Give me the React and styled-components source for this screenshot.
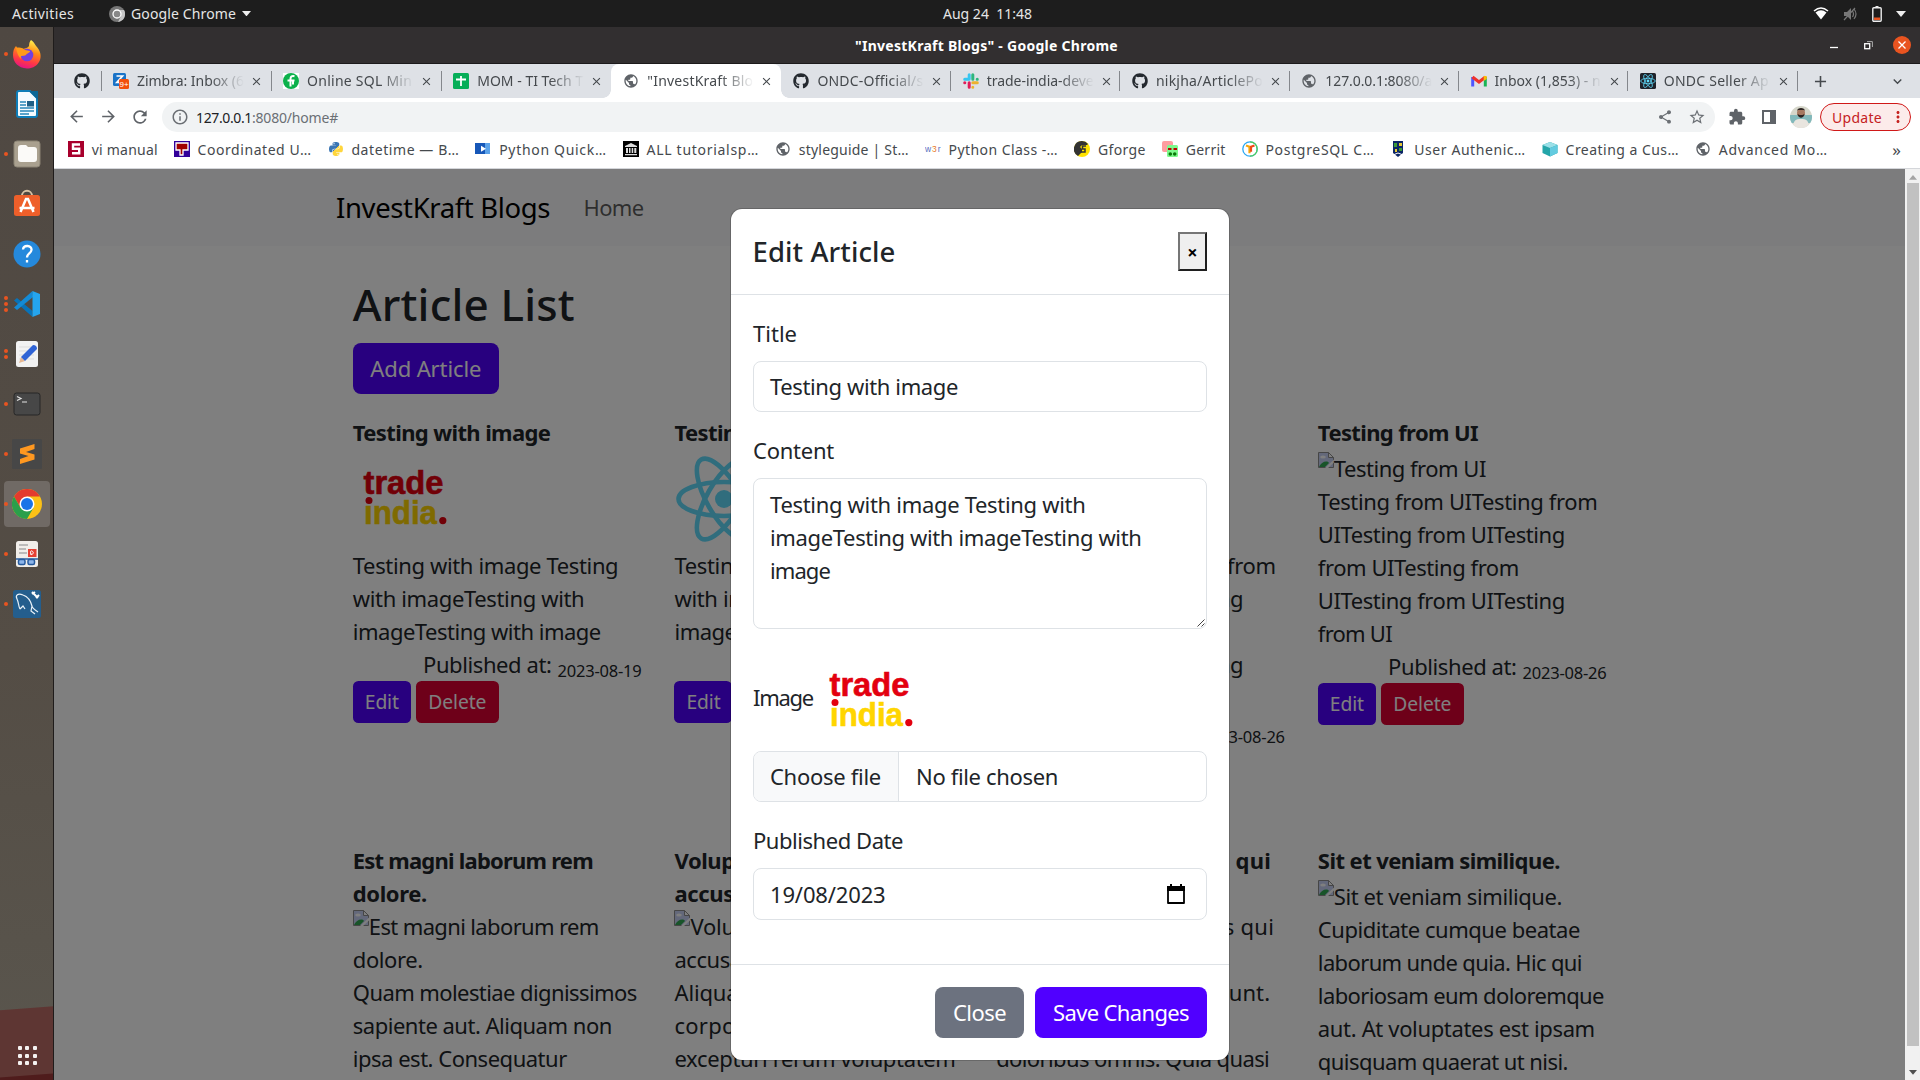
import React, { useLayoutEffect, useRef, useState } from "react";
import styled, { createGlobalStyle, css } from "styled-components";
import { FaGithub, FaPython } from "react-icons/fa";
import {
  MdArrowBack, MdArrowForward, MdRefresh, MdInfoOutline, MdShare, MdStarBorder,
  MdExtension, MdPublic, MdClose, MdAdd, MdExpandMore, MdMoreVert,
} from "react-icons/md";

const Global = createGlobalStyle`
  *, *::before, *::after { box-sizing: border-box; }
  body { margin: 0; overflow: hidden; font-family: "Noto Sans", "Open Sans", sans-serif; }
  button { font-family: inherit; }
  svg { display: block; flex: none; }
`;

/* Text tracked so that its run takes exactly w pixels. */
const Run = styled.span`
  display: inline-block;
  white-space: pre;
`;
function Fit({ w, children }) {
  const ref = useRef(null);
  const [spacing, setSpacing] = useState(0);
  useLayoutEffect(() => {
    ref.current.style.letterSpacing = "0px";
    const natural = ref.current.getBoundingClientRect().width;
    const value = (w - natural) / children.length;
    ref.current.style.letterSpacing = `${value}px`;
    setSpacing(value);
  }, [w, children]);
  return <Run ref={ref} style={{ letterSpacing: `${spacing}px` }}>{children}</Run>;
}

const Desktop = styled.div`
  width: 1920px;
  height: 1080px;
  display: flex;
  flex-direction: column;
  overflow: hidden;
`;

/* ---------- top panel ---------- */
const Panel = styled.header`
  height: 27px;
  flex: none;
  display: grid;
  grid-template-columns: 1fr auto 1fr;
  align-items: center;
  padding: 0 14px 0 12px;
  background: #1d1d1d;
  color: #e6e6e6;
  font-size: 14px;
  line-height: 26px;
`;
const PanelGroup = styled.div`
  display: flex;
  align-items: center;
  justify-content: ${(p) => (p.$end ? "flex-end" : "flex-start")};
  gap: ${(p) => p.$gap}px;
`;
const Clock = styled.div`
  padding-left: 57px;
`;
const AppMenu = styled.div`
  display: flex;
  align-items: center;
  gap: 6px;
  margin-left: 26px;
`;

/* ---------- dock ---------- */
const Body = styled.div`
  flex: 1;
  display: flex;
  min-height: 0;
`;
const Dock = styled.nav`
  width: 54px;
  flex: none;
  display: flex;
  flex-direction: column;
  padding: 2px 0 0;
  border-right: 1px solid #1f1c1b;
  background:
    linear-gradient(175.7deg, transparent 980px, #5e3633 981px, #5e3633 1047px, #4f1c1c 1048px),
    linear-gradient(#4f4842, #544d45 60%, #5a564e);
`;
const DockItem = styled.div`
  height: 50px;
  display: flex;
  align-items: center;
`;
const DockTile = styled.div`
  width: 46px;
  height: 46px;
  margin-left: 4px;
  border-radius: 4px;
  display: flex;
  align-items: center;
  background: ${(p) => (p.$active ? "#706a65" : "transparent")};
`;
const Dots = styled.div`
  width: 4px;
  display: flex;
  flex-direction: column;
  gap: 2px;
  margin-right: 4px;
`;
const Dot = styled.i`
  height: 4px;
  border-radius: 2px;
  background: #e95420;
`;
const AppsButton = styled.div`
  margin: auto 0 15px 17.5px;
  display: grid;
  grid-template-columns: repeat(3, 4px);
  gap: 3.5px;
`;
const AppsDot = styled.i`
  height: 4px;
  border-radius: 1px;
  background: #f4f2f1;
`;

/* ---------- browser window ---------- */
const Window = styled.main`
  flex: 1;
  min-width: 0;
  display: flex;
  flex-direction: column;
`;
const TitleBar = styled.div`
  height: 37px;
  flex: none;
  display: grid;
  grid-template-columns: 1fr auto 1fr;
  align-items: center;
  padding: 0 9px 0;
  background: #322f30;
  border-bottom: 1px solid #1c1a1b;
  color: #fff;
  font-size: 14px;
  font-weight: 700;
  line-height: 36px;
`;
const WindowTitle = styled.div`
  grid-column: 2;
  padding: 1px 1px 0 0;
  height: 36px;
`;
const WindowButtons = styled.div`
  display: flex;
  justify-content: flex-end;
  align-items: center;
  gap: 20.5px;
`;
const Minimise = styled.svg`
  margin-right: 5px;
`;
const Tabs = styled.div`
  height: 34px;
  flex: none;
  display: flex;
  align-items: center;
  background: #dee1e6;
  color: #45494d;
  font-size: 14px;
`;
const Pinned = styled.div`
  width: 47px;
  display: flex;
  padding-left: 20px;
`;
const NewTab = styled.div`
  padding-left: 13.5px;
`;
const TabSearch = styled.div`
  margin: 0 14px 0 auto;
`;
const Tab = styled.div`
  width: ${(p) => p.$w}px;
  height: 34px;
  flex: none;
  display: flex;
  align-items: center;
  position: relative;
  padding-left: 12px;
  ${(p) => p.$active && css`
    background: #fff;
    border-radius: 8px 8px 0 0;
    &::before, &::after {
      content: "";
      position: absolute;
      bottom: 0;
      width: 8px;
      height: 8px;
    }
    &::before { left: -8px; background: radial-gradient(circle at 0 0, transparent 7.5px, #fff 8px); }
    &::after { right: -8px; background: radial-gradient(circle at 100% 0, transparent 7.5px, #fff 8px); }
  `}
`;
const TabRule = styled.i`
  width: 1px;
  height: 20px;
  margin: 0 -0.5px;
  flex: none;
  background: ${(p) => (p.$hidden ? "transparent" : "#84878c")};
`;
const TabLabel = styled.div`
  width: 107px;
  margin: 0 6px 1px 8px;
  overflow: hidden;
  white-space: nowrap;
  mask-image: linear-gradient(90deg, #000 68%, transparent);
`;
const Spacer = styled.div`
  flex: 1;
`;
const Toolbar = styled.div`
  height: 38px;
  flex: none;
  display: flex;
  align-items: center;
  padding: 0 9px 0 13px;
  background: #fff;
  color: #5f6368;
`;
const NavIcons = styled.div`
  display: flex;
  gap: 12.5px;
  width: 95px;
  flex: none;
`;
const Address = styled.div`
  width: 1553px;
  flex: none;
  height: 30px;
  border-radius: 15px;
  display: flex;
  align-items: center;
  gap: 7px;
  padding: 0 9px;
  background: #f1f3f4;
  font-size: 14px;
  color: #6b6f74;
`;
const Url = styled.span`
  flex: 1;
  b { font-weight: 400; color: #202124; }
`;
const AddressIcons = styled.div`
  display: flex;
  align-items: center;
  gap: 15px;
`;
const Actions = styled.div`
  flex: 1;
  display: flex;
  align-items: center;
  padding-left: 13px;
`;
const SideIcon = styled.div`
  width: 14px;
  height: 14px;
  border: 2px solid #5f6368;
  border-right-width: 6px;
  margin: 0 14px 0 16px;
`;
const Update = styled.div`
  width: 91px;
  height: 28px;
  margin-left: 8px;
  padding: 0 3px 0 11px;
  border: 1px solid #d01818;
  border-radius: 14px;
  display: flex;
  align-items: center;
  justify-content: space-between;
  background: #fcebea;
  color: #c5221f;
  font-size: 14px;
`;
const Bookmarks = styled.div`
  height: 33px;
  flex: none;
  display: flex;
  align-items: center;
  padding: 0 19px 6px 14px;
  gap: 16px;
  background: #fff;
  border-bottom: 1px solid #d4d6da;
  color: #45494d;
  font-size: 14px;
`;
const Bookmark = styled.div`
  display: flex;
  align-items: center;
  gap: 7.8px;
  flex: none;
`;
const More = styled.div`
  margin-left: auto;
  font-size: 17px;
`;

/* ---------- page ---------- */
const Viewport = styled.div`
  flex: 1;
  min-height: 0;
  display: flex;
  overflow: hidden;
`;
const Page = styled.div`
  width: 1851px;
  position: relative;
  overflow: hidden;
  background: #fff;
  color: #212529;
  font-size: 22px;
  line-height: 33px;
`;
const Navbar = styled.div`
  height: 77px;
  display: flex;
  align-items: center;
  gap: 33.5px;
  padding-left: 282px;
  background: #f8f9fa;
  color: rgba(0, 0, 0, 0.65);
`;
const Brand = styled.span`
  font-size: 27.5px;
  color: #000;
`;
const Container = styled.div`
  padding: 31px 0 0 298.8px;
`;
const Heading = styled.h1`
  margin: 0 0 11px;
  height: 55px;
  font-size: 44px;
  font-weight: 540;
  line-height: 55px;
`;
const tones = { primary: "#5000ff", danger: "#dc0032", secondary: "#6c727f" };
const Button = styled.button`
  display: inline-flex;
  align-items: center;
  justify-content: center;
  width: ${(p) => p.$w}px;
  height: ${(p) => (p.$small ? 42 : 51)}px;
  padding: 0;
  border: 0;
  border-radius: ${(p) => (p.$small ? 5.5 : 8)}px;
  background: ${(p) => tones[p.$tone]};
  color: #fff;
  font-size: ${(p) => (p.$small ? 19.25 : 22)}px;
  line-height: 1.5;
`;
const Row = styled.div`
  display: flex;
  gap: 33px;
  height: 428px;
  margin-top: ${(p) => (p.$first ? 22 : 0)}px;
`;
const Card = styled.article`
  width: 288.7px;
  flex: none;
`;
const Line = styled.div`
  height: 33px;
  display: flex;
  font-weight: ${(p) => (p.$bold ? 700 : 400)};
  margin-top: ${(p) => p.$drop || 0}px;
`;
const Picture = styled.div`
  width: 100px;
  height: 100px;
`;
const Published = styled.div`
  height: 33px;
  display: flex;
  justify-content: flex-end;
  gap: 6px;
`;
const DateText = styled.span`
  font-size: 16.5px;
  line-height: 45px;
`;
const CardButtons = styled.div`
  display: flex;
  gap: 5px;
`;
const Backdrop = styled.div`
  position: absolute;
  inset: 0;
  background: rgba(0, 0, 0, 0.5);
  display: flex;
  justify-content: center;
  align-items: flex-start;
  padding-top: 40px;
`;
const Modal = styled.section`
  width: 498px;
  height: 851px;
  margin-left: 1px;
  border-radius: 11px;
  background: #fff;
  box-shadow: 0 0 0 1px rgba(0, 0, 0, 0.175);
`;
const ModalHeader = styled.div`
  height: 86px;
  display: flex;
  align-items: center;
  justify-content: space-between;
  padding: 0 22px 0 21.5px;
  border-bottom: 1px solid #dee2e6;
  font-size: 27.5px;
  font-weight: 540;
`;
const CloseBox = styled.button`
  width: 29px;
  height: 39px;
  padding: 1px 0 0;
  border: 2px solid;
  border-color: #767676 #1f1f1f #1f1f1f #767676;
  background: #efefef;
  color: #000;
  font-size: 18px;
  font-weight: 700;
`;
const Form = styled.div`
  height: 669px;
  padding: 22px;
`;
const Label = styled.div`
  height: 33px;
  margin-bottom: 11px;
`;
const Field = styled.div`
  height: ${(p) => p.$h || 51}px;
  margin-bottom: 22px;
  border: 1px solid #dee2e6;
  border-radius: 8px;
  padding: ${(p) => (p.$h > 100 ? "9px 0 0 16px" : "0 20px 0 16px")};
  display: flex;
  align-items: ${(p) => (p.$h > 100 ? "stretch" : "center")};
`;
const Lines = styled.div`
  display: flex;
  flex-direction: column;
  align-items: flex-start;
  flex: 1;
`;
const Grip = styled.svg`
  align-self: flex-end;
  margin: 0 1px 1px 0;
`;
const ImageRow = styled.div`
  height: 100px;
  display: flex;
  align-items: center;
  gap: 6px;
`;
const ImageLabel = styled.span`
  margin-top: -8px;
`;
const FileButton = styled.div`
  height: 49px;
  width: 144.5px;
  margin: 0 17.5px 0 -16px;
  padding: 8px 0 0 16px;
  border-right: 1px solid #dee2e6;
  border-radius: 7px 0 0 7px;
  background: #f8f9fa;
`;
const ModalFooter = styled.div`
  height: 96px;
  display: flex;
  justify-content: flex-end;
  gap: 11px;
  padding: 22px;
  border-top: 1px solid #dee2e6;
`;
const Scrollbar = styled.div`
  width: 15px;
  display: flex;
  flex-direction: column;
  align-items: center;
  justify-content: space-between;
  padding: 6px 0 5px;
  background: #f1f1f1;
`;
const Thumb = styled.div`
  width: 12px;
  height: 863px;
  margin: 3px 0 auto 1px;
  background: #c1c1c1;
`;

/* ---------- drawings ---------- */
const Svg = ({ s = 16, vb = 16, children }) => (
  <svg width={s} height={s} viewBox={`0 0 ${vb} ${vb}`}>{children}</svg>
);
const Caret = ({ c = "#eee", up, w = 10 }) => (
  <svg width={w} height={w * 0.6} viewBox="0 0 10 6"><path d={up ? "M0 6h10L5 0z" : "M0 0h10L5 6z"} fill={c} /></svg>
);
const SlackMark = () => (
  <Svg>
    <g strokeWidth="3" strokeLinecap="round">
      <path d="M6.2 1.7v4.4M1.7 6.2h.2M1.8 6.2h4.2" stroke="#36c5f0" />
      <path d="M9.8 1.7v4.5M14.2 6.2h.1" stroke="#2eb67d" />
      <path d="M9.8 9.8h4.5M9.8 14.2v.1" stroke="#ecb22e" />
      <path d="M6.2 9.8v4.5M1.7 9.8h.1" stroke="#e01e5a" />
    </g>
  </Svg>
);
const ReactRings = ({ w }) => (
  <g fill="none" stroke="#61dafb" strokeWidth={w}>
    <ellipse cx="50" cy="50" rx="45.5" ry="17" />
    <ellipse cx="50" cy="50" rx="45.5" ry="17" transform="rotate(60 50 50)" />
    <ellipse cx="50" cy="50" rx="45.5" ry="17" transform="rotate(120 50 50)" />
    <circle cx="50" cy="50" r="9" fill="#61dafb" stroke="none" />
  </g>
);
const TradeIndia = () => (
  <Svg s={100} vb={100}>
    <g fontFamily="Liberation Sans, Arial, sans-serif" fontWeight="700" fontSize="32.5" strokeWidth="0.6">
      <text x="10.5" y="44.5" textLength="80" lengthAdjust="spacingAndGlyphs" fill="#e3000f" stroke="#e3000f">trade</text>
      <text x="11" y="75" textLength="73" lengthAdjust="spacingAndGlyphs" fill="#ffd500" stroke="#ffd500">india</text>
    </g>
    <rect x="11.5" y="49.4" width="8.5" height="6" fill="#fff" />
    <circle cx="16" cy="51.6" r="3.5" fill="#e3000f" />
    <circle cx="89.8" cy="71.6" r="3.6" fill="#e3000f" />
  </Svg>
);
const Broken = () => (
  <Svg>
    <path d="M.5.5h10l5 5v10H.5z" fill="#c6d0f5" stroke="#8d8d8d" />
    <path d="M10.5.5v5h5z" fill="#fff" stroke="#8d8d8d" />
    <ellipse cx="5" cy="5" rx="2.8" ry="1.5" fill="#fff" />
    <path d="M1 15c2-5 8-7 10-4l-4 4z" fill="#33a852" />
    <path d="M6.5 16.5L16.5 7v3l-7 6.5z" fill="#fff" />
  </Svg>
);
const fav = {
  zimbra: <Svg><rect width="13" height="13" rx="1.5" fill="#1a73c7" /><path d="M3.5 3h6L3.8 9.5H8" fill="none" stroke="#fff" strokeWidth="1.7" /><rect x="6" y="6" width="10" height="10" rx="1.5" fill="#f2500a" /><text x="6.6" y="14" fontSize="8" fontFamily="Liberation Sans" fill="#fff">9+</text></Svg>,
  sql: <Svg><rect width="16" height="16" fill="#fff" /><circle cx="8" cy="8" r="8" fill="#0cb14b" /><path d="M11.5 3.2c-3-.7-4 .8-4 2.8v7.5M4.5 7.5h7M10 7.5v4" fill="none" stroke="#fff" strokeWidth="2" /></Svg>,
  mom: <Svg><rect width="16" height="16" rx="1.5" fill="#06ae58" /><path d="M8 3v10M3 6.5h10" stroke="#fff" strokeWidth="1.8" /></Svg>,
  globe: <MdPublic size={16} color="#5f6368" />,
  github: <FaGithub size={16} color="#24292f" />,
  slack: <SlackMark />,
  gmail: <Svg><path d="M1.7 13.5V4" stroke="#4f55ff" strokeWidth="3" /><path d="M14.3 13.5V4" stroke="#18b455" strokeWidth="3" /><path d="M1.5 4L8 9l6.5-5" fill="none" stroke="#f0322b" strokeWidth="3.2" /><path d="M12.7 3h3v3l-3 2z" fill="#fbbc04" /></Svg>,
  ondc: <Svg vb={100}><rect width="100" height="100" rx="10" fill="#20232a" /><ReactRings w={5} /></Svg>,
};
const marks = {
  vi: <Svg><rect width="16" height="16" fill="#a8002c" /><path d="M12 3.5H5v4.3h6.2v4.5H4" fill="none" stroke="#fff" strokeWidth="2.4" /></Svg>,
  coord: <Svg><rect width="16" height="16" fill="#32009a" /><path d="M2 2h12v7H9v5H6V9H2z" fill="#a00000" stroke="#fff" strokeWidth="1.3" /></Svg>,
  python: <><svg width="0" height="0" style={{ position: "absolute" }}><linearGradient id="py" x1="0" y1="0" x2="1" y2="1"><stop offset=".48" stopColor="#3b76b4" /><stop offset=".5" stopColor="#ffd63d" /></linearGradient></svg><FaPython size={16} fill="url(#py)" /></>,
  quick: <Svg><rect x="0" y="2" width="14" height="11" fill="#1757b8" /><rect x="10" y="2" width="5" height="11" fill="#5ca3ea" /><path d="M6 4.7v6l5-3z" fill="#fff" /></Svg>,
  all: <Svg><rect width="16" height="16" fill="#000" /><path d="M2 5l6-3 6 3v1H2zM3 7h2v5H3zM6 7h1.5v5H6zM8.7 7h1.5v5H8.7zM11.3 7h2v5h-2zM2 13h12v1.3H2z" fill="#ddd" /></Svg>,
  w3r: <Svg><text x="0" y="11" fontSize="8.5" textLength="15.5" fontFamily="Liberation Sans" fill="#5a6fc0">w<tspan fill="#e87c2a">3</tspan>r</text></Svg>,
  gforge: <Svg><circle cx="8" cy="8" r="8" fill="#ffe400" /><path d="M8 0a8 8 0 0 0-4 15l4-4V8L6 6l2-2h5l1-1A8 8 0 0 0 8 0z" fill="#333" /><path d="M12 5H8.5v3H11v3H7" fill="none" stroke="#333" strokeWidth="1.5" /></Svg>,
  gerrit: <Svg><rect width="11" height="11" rx="2" fill="#ff9da0" /><rect x="5" y="4" width="11" height="12" rx="1.5" fill="#7dfa8c" /><path d="M6 8h3.5M11.5 8H15" stroke="#b00" strokeWidth="2" /><circle cx="8.3" cy="13" r="1.8" fill="#087808" /><circle cx="12.7" cy="13" r="1.8" fill="#087808" /></Svg>,
  pg: <Svg><circle cx="8" cy="8" r="7.2" fill="#fff" stroke="#2aa8f2" strokeWidth="1.3" /><path d="M8 .8a7.2 7.2 0 0 1 0 14.4" fill="none" stroke="#52d053" strokeWidth="1.3" /><path d="M4 4.5l3.5 1.2v6.5" fill="none" stroke="#f6a70a" strokeWidth="2.2" /><path d="M12.5 4.5L9 5.7v5" fill="none" stroke="#f04a13" strokeWidth="2.2" /></Svg>,
  user: <Svg><path d="M3 0h10v12l-5 4-5-4z" fill="#0c2665" /><path d="M4 2h3v4H4zM9 7h3v3H9z" fill="#3b9b36" /><path d="M9 2h3v3H9zM5 8h2v3H5z" fill="#e8c832" /><path d="M3 14l5-2 5 2" fill="none" stroke="#fff" /></Svg>,
  cube: <Svg><path d="M8 1l7.5 3v8L8 15.5.5 12V4z" fill="#24a5a9" /><path d="M8 1l7.5 3L8 7 .5 4z" fill="#9be0e8" /><path d="M15.5 4v8L8 15.5V7z" fill="#63cbe0" /></Svg>,
  globe: <MdPublic size={16} color="#5f6368" />,
};
const dock = {
  firefox: <Svg s={30} vb={30}><defs><linearGradient id="ff" x1=".7" y1="0" x2=".4" y2="1"><stop offset="0" stopColor="#fff44f" /><stop offset=".4" stopColor="#ff8a16" /><stop offset=".75" stopColor="#ff3647" /><stop offset="1" stopColor="#e31587" /></linearGradient></defs><path d="M19 1c4 3 4 5 6 7 5 6 4 12 2 15-3 5-8 6.5-12 6.5C6 29 1 23 1 16c0-4 1-7 3-9l2 3c2-1 4-1 5 0 2-1 5-1 6-3 0-3 1-5 2-6z" fill="url(#ff)" /><circle cx="15" cy="16" r="6.3" fill="#7140e0" /><path d="M4 9c4-1 7 0 9 2l5 1c0 2-3 2-4 4-3 2-6-1-5 4-3-3-4-6-5-11z" fill="#ff9a1a" /></Svg>,
  writer: <Svg s={30} vb={30}><path d="M7 2h11l7 7v17q0 2-2 2H7q-2 0-2-2V4q0-2 2-2z" fill="#f4fbff" stroke="#0e7db8" strokeWidth="2" /><path d="M17 2h9v9z" fill="#0d6795" /><path d="M8 13h6M8 16h6M8 19h14M8 22h14M8 25h9" stroke="#2787b9" strokeWidth="1.4" /><rect x="15" y="12" width="7" height="5.5" fill="#1f5f86" /></Svg>,
  files: <Svg s={30} vb={30}><rect x="2" y="2" width="26" height="26" rx="3" fill="#a9a08f" stroke="#8b8475" /><path d="M6 9q0-3 3-3h5l2 2h6q3 0 3 3v9q0 3-3 3H9q-3 0-3-3z" fill="#fbfaf8" /></Svg>,
  store: <Svg s={30} vb={30}><path d="M10 7c0-7 10-7 10 0" fill="none" stroke="#d8c3a5" strokeWidth="1.8" /><rect x="2" y="6" width="26" height="21" rx="2.5" fill="#ee5f2a" /><path d="M8.5 23L14 10h2l5.5 13M7.5 19h15" fill="none" stroke="#fff" strokeWidth="2.5" /></Svg>,
  help: <Svg s={30} vb={30}><circle cx="15" cy="15" r="13.5" fill="#2589dc" /><path d="M11 10.5c.5-5 9-4.5 8.5.5-.3 3.5-4.5 3.5-4.5 7.5M15 21v2.5" fill="none" stroke="#fff" strokeWidth="2.3" /></Svg>,
  code: <Svg s={30} vb={30}><path d="M20.5 2v26L2 11.5 5 9l15.5 13z" fill="#0873b9" /><path d="M20.5 2L2 18.5 5 21 21 8z" fill="#148bd6" /><path d="M20.5 2L28 5v20l-7.5 3z" fill="#25a5ee" /></Svg>,
  editor: <Svg s={30} vb={30}><rect x="4" y="2" width="22" height="26" rx="2.5" fill="#f2f2f2" /><path d="M7 8h15M7 12h15M7 16h15M7 20h15" stroke="#ddd" /><path d="M7 24l2-6 4 4z" fill="#e7b892" /><path d="M9 18L21 6q4 0 4 4L13 22z" fill="#2f63d5" /></Svg>,
  terminal: <Svg s={30} vb={30}><rect x="2" y="4" width="26" height="22" rx="2.5" fill="#474747" stroke="#272727" /><path d="M5 7.5l4 2-4 2M10 13h5" fill="none" stroke="#e4e4e4" strokeWidth="1.2" /></Svg>,
  sublime: <Svg s={30} vb={30}><rect width="30" height="30" rx="1.5" fill="#474747" /><path d="M8 9.5L22.5 5v5L14 13l8.5 2.5v5L8 25v-5l8.5-3L8 14.5z" fill="#ff9820" /></Svg>,
  chrome: <Svg s={30} vb={30}><circle cx="15" cy="15" r="15" fill="#fbc116" /><path d="M2 7.5a15 15 0 0 1 26 0H15V15l-6.5 3.75z" fill="#e33b2e" /><path d="M2 7.5a15 15 0 0 0 13 22.5l6.5-11.25H8.5z" fill="#2b9f4b" /><circle cx="15" cy="15" r="7.5" fill="#fff" /><circle cx="15" cy="15" r="6" fill="#1a73e8" /></Svg>,
  reader: <Svg s={30} vb={30}><rect x="4" y="2" width="22" height="26" rx="2.5" fill="#f1eeea" /><path d="M7 6h9M7 10h7M7 14h8" stroke="#aaa" strokeWidth="1.5" /><rect x="16" y="10" width="8.5" height="8" fill="#e64033" /><path d="M18 15c4 1 4-2 2-3s-2 3 0 4" fill="none" stroke="#fff" /><rect x="6.5" y="20.5" width="6.5" height="5" rx="1.5" fill="#8db5ea" stroke="#275b9e" strokeWidth="1.5" /><rect x="16" y="20.5" width="6.5" height="5" rx="1.5" fill="#8db5ea" stroke="#275b9e" strokeWidth="1.5" /><path d="M4 20h22" stroke="#275b9e" strokeWidth="1.5" /></Svg>,
  workbench: <Svg s={30} vb={30}><rect x="1" y="1" width="28" height="28" rx="2.5" fill="#245e8d" /><path d="M8 20c-2-4-1-6-3-10s1-6 6-4c6 2 8 7 9 11 0 2 3 4 6 6M8 20l3-3 2 3M20 17l-1 5 4 3" fill="none" stroke="#eaf2f8" strokeWidth="1.2" /><path d="M20 3l6 6M20 5l3-2M24 9l3-3" stroke="#fff" strokeWidth="2" /></Svg>,
};
const GreyChrome = () => (
  <Svg s={16} vb={16}><circle cx="8" cy="8" r="8" fill="#777" /><path d="M8 4h7a8 8 0 0 1-6 12l3-6z" fill="#c6c6c6" /><circle cx="8" cy="8" r="4" fill="#888" stroke="#fff" strokeWidth="1.3" /></Svg>
);
const Avatar = () => (
  <Svg s={22} vb={22}><clipPath id="av"><circle cx="11" cy="11" r="11" /></clipPath><g clipPath="url(#av)"><rect width="22" height="22" fill="#d5d6ca" /><path d="M0 9h22v8H0z" fill="#82b9bb" /><path d="M3 22c0-8 3-9 8-9s8 1 8 9z" fill="#e9e5df" /><circle cx="11" cy="7" r="4" fill="#a77961" /><path d="M7 5c0-4 8-4 8 0l-1-1H8zM7.5 8c1 5 6 5 7 0l-2 1h-3z" fill="#2d2422" /></g></Svg>
);

/* ---------- data ---------- */
const dockItems = [
  ["firefox", 1], ["writer", 0], ["files", 1], ["store", 0], ["help", 0], ["code", 3],
  ["editor", 2], ["terminal", 1], ["sublime", 1], ["chrome", 1], ["reader", 1], ["workbench", 1],
];
const tabs = [
  ["zimbra", "Zimbra: Inbox (6", 107], ["sql", "Online SQL Min", 105], ["mom", "MOM - TI Tech T", 106],
  ["globe", '"InvestKraft Blo', 106], ["github", "ONDC-Official/s", 106], ["slack", "trade-india-deve", 107],
  ["github", "nikjha/ArticlePo", 107], ["globe", "127.0.0.1:8080/a", 107], ["gmail", "Inbox (1,853) - n", 106],
  ["ondc", "ONDC Seller Ap", 105],
];
const bookmarks = [
  ["vi", "vi manual", 66], ["coord", "Coordinated U…", 114], ["python", "datetime — B…", 108],
  ["quick", "Python Quick…", 107.5], ["all", "ALL tutorialsp…", 112.5], ["globe", "styleguide | St…", 110],
  ["w3r", "Python Class -…", 109.5], ["gforge", "Gforge", 48], ["gerrit", "Gerrit", 40],
  ["pg", "PostgreSQL C…", 109], ["user", "User Authenic…", 111.5], ["cube", "Creating a Cus…", 113.5],
  ["globe", "Advanced Mo…", 109],
];
const withImage = [["Testing with image Testing", 265.5], ["with imageTesting with", 231.5], ["imageTesting with image", 248]];
const fromUi = [
  ["Testing from UITesting from", 279.5], ["UITesting from UITesting", 247], ["from UITesting from", 201],
  ["UITesting from UITesting", 247], ["from UI", 74],
];
const rows = [
  [
    { title: [["Testing with image", 197.5]], picture: "trade", body: withImage, date: "2023-08-19" },
    { title: [["Testing with image", 197.5]], picture: "react", body: withImage, date: "2023-08-19" },
    { title: [["Testing from UI", 160]], picture: "trade", body: fromUi, date: "2023-08-26" },
    { title: [["Testing from UI", 160]], alt: [["Testing from UI", 152]], drop: 3, body: fromUi, date: "2023-08-26" },
  ],
  [
    {
      title: [["Est magni laborum rem", 240], ["dolore.", 74]],
      alt: [["Est magni laborum rem", 230], ["dolore.", 70]],
      body: [["Quam molestiae dignissimos", 284], ["sapiente aut. Aliquam non", 259], ["ipsa est. Consequatur", 214]],
    },
    {
      title: [["Voluptatem et", 152], ["accusamus.", 124]],
      alt: [["Voluptatem et", 143], ["accusamus.", 116]],
      body: [["Aliquam quia sed", 176], ["corporis et.", 120], ["excepturi rerum voluptatem", 281]],
    },
    {
      title: [["Dolorum temporibus qui", 275], ["et.", 30]],
      alt: [["Dolorum temporibus qui", 262], ["et.", 28]],
      body: [["Eos aut rem sint deserunt.", 274], ["Et in vel.", 90], ["doloribus omnis. Quia quasi", 273]],
    },
    {
      title: [["Sit et veniam similique.", 242]],
      alt: [["Sit et veniam similique.", 228]],
      drop: 3,
      body: [
        ["Cupiditate cumque beatae", 262], ["laborum unde quia. Hic qui", 264], ["laboriosam eum doloremque", 286],
        ["aut. At voluptates est ipsam", 277], ["quisquam quaerat ut nisi.", 250],
      ],
    },
  ],
];

function Article({ title, picture, alt, drop, body, date }) {
  return (
    <Card>
      {title.map(([t, w]) => <Line key={t} $bold><Fit w={w}>{t}</Fit></Line>)}
      {picture && (
        <Picture>
          {picture === "trade" ? <TradeIndia /> : <Svg s={100} vb={100}><ReactRings w={4.6} /></Svg>}
        </Picture>
      )}
      {alt && alt.map(([t, w], i) => (
        <Line key={t} $drop={i === 0 ? drop : 0}>{i === 0 && <Broken />}<Fit w={w}>{t}</Fit></Line>
      ))}
      {body.map(([t, w], i) => <Line key={i}><Fit w={w}>{t}</Fit></Line>)}
      {date && (
        <>
          <Published><Fit w={128.5}>Published at:</Fit><DateText><Fit w={84}>{date}</Fit></DateText></Published>
          <CardButtons>
            <Button $small $tone="primary" $w={58}><Fit w={34}>Edit</Fit></Button>
            <Button $small $tone="danger" $w={83}><Fit w={58}>Delete</Fit></Button>
          </CardButtons>
        </>
      )}
    </Card>
  );
}

function EditModal() {
  return (
    <Backdrop>
      <Modal>
        <ModalHeader><Fit w={143}>Edit Article</Fit><CloseBox>×</CloseBox></ModalHeader>
        <Form>
          <Label><Fit w={44}>Title</Fit></Label>
          <Field><Fit w={188}>Testing with image</Fit></Field>
          <Label><Fit w={81}>Content</Fit></Label>
          <Field $h={151}>
            <Lines>
              <Fit w={315.5}>Testing with image Testing with</Fit>
              <Fit w={371.5}>imageTesting with imageTesting with</Fit>
              <Fit w={60}>image</Fit>
            </Lines>
            <Grip width="8" height="8" viewBox="0 0 8 8"><path d="M.5 7.5l7-7M4.5 7.5l3-3" stroke="#444" /></Grip>
          </Field>
          <ImageRow><ImageLabel><Fit w={60}>Image</Fit></ImageLabel><TradeIndia /></ImageRow>
          <Field>
            <FileButton><Fit w={111}>Choose file</Fit></FileButton>
            <Fit w={142}>No file chosen</Fit>
          </Field>
          <Label><Fit w={150}>Published Date</Fit></Label>
          <Field $h={52}>
            <Fit w={115.5}>19/08/2023</Fit>
            <Spacer />
            <svg width="20" height="20" viewBox="0 0 20 20"><path d="M2 3h16v16H2z" fill="none" stroke="#000" strokeWidth="1.8" strokeLinejoin="round" /><path d="M1 2h18v5H1zM4 0h2v3H4zM14 0h2v3h-2z" /></svg>
          </Field>
        </Form>
        <ModalFooter>
          <Button $tone="secondary" $w={89}><Fit w={53}>Close</Fit></Button>
          <Button $tone="primary" $w={172}><Fit w={136}>Save Changes</Fit></Button>
        </ModalFooter>
      </Modal>
    </Backdrop>
  );
}

export default function App() {
  return (
    <Desktop>
      <Global />
      <Panel>
        <PanelGroup $gap={9}>
          <Fit w={62}>Activities</Fit>
          <AppMenu><GreyChrome /><Fit w={105}>Google Chrome</Fit><Caret w={9} /></AppMenu>
        </PanelGroup>
        <Clock><Fit w={89}>Aug 24  11:48</Fit></Clock>
        <PanelGroup $end $gap={14}>
          <svg width="16" height="13" viewBox="0 0 16 13"><path d="M1 4q7-6 14 0" fill="none" stroke="#fff" strokeWidth="1.5" /><path d="M2.5 5.5q5.500-4.500 11 0L8 12.500z" fill="#fff" /></svg>
          <svg width="15" height="14" viewBox="0 0 15 14"><path d="M1 5h3l4-4v12L4 9H1z" fill="#777" /><path d="M9.5 4q2 3 0 6M11 2q4 5 0 10M1 13L12 1" fill="none" stroke="#777" strokeWidth="1.2" /></svg>
          <svg width="10" height="16" viewBox="0 0 10 16"><path d="M3.5 0h3v2h-3z" fill="#eee" /><rect x=".8" y="1.8" width="8.4" height="13.4" rx="1" fill="none" stroke="#eee" strokeWidth="1.4" /><path d="M2 11.5h6V14H2z" fill="#e95420" /></svg>
          <Caret />
        </PanelGroup>
      </Panel>
      <Body>
        <Dock>
          {dockItems.map(([name, n]) => (
            <DockItem key={name}>
              <DockTile $active={name === "chrome"}>
                <Dots>{Array.from({ length: n }, (_, i) => <Dot key={i} />)}</Dots>
                {dock[name]}
              </DockTile>
            </DockItem>
          ))}
          <AppsButton>{Array.from({ length: 9 }, (_, i) => <AppsDot key={i} />)}</AppsButton>
        </Dock>
        <Window>
          <TitleBar>
            <WindowTitle><Fit w={263}>"InvestKraft Blogs" - Google Chrome</Fit></WindowTitle>
            <WindowButtons>
              <Minimise width="8" height="10" viewBox="0 0 8 10"><path d="M0 7.5h8" stroke="#fff" strokeWidth="1.3" /></Minimise>
              <svg width="9" height="9" viewBox="0 0 9 9"><rect x=".7" y="2.7" width="5" height="5" fill="none" stroke="#fff" strokeWidth="1.3" /><path d="M3 .6h5.4V6" fill="none" stroke="#aaa" /></svg>
              <Svg s={18} vb={18}><circle cx="9" cy="9" r="9" fill="#e95420" /><path d="M5.5 5.5l7 7M12.5 5.5l-7 7" stroke="#fff" strokeWidth="1.3" /></Svg>
            </WindowButtons>
          </TitleBar>
          <Tabs>
            <Pinned>{fav.github}</Pinned>
            <TabRule />
            {tabs.map(([icon, text, w], i) => (
              <React.Fragment key={text}>
                <Tab $active={i === 3} $w={i < 4 ? 170.1 : 169.3}>
                  {fav[icon]}
                  <TabLabel><Fit w={w}>{text}</Fit></TabLabel>
                  <MdClose size={13} />
                </Tab>
                <TabRule $hidden={i === 2 || i === 3} />
              </React.Fragment>
            ))}
            <NewTab><MdAdd size={19} /></NewTab>
            <TabSearch><MdExpandMore size={17} /></TabSearch>
          </Tabs>
          <Toolbar>
            <NavIcons><MdArrowBack size={19} /><MdArrowForward size={19} /><MdRefresh size={20} /></NavIcons>
            <Address>
              <MdInfoOutline size={18} />
              <Url><b><Fit w={56}>127.0.0.1</Fit></b><Fit w={86}>:8080/home#</Fit></Url>
              <AddressIcons><MdShare size={16} /><MdStarBorder size={18} /></AddressIcons>
            </Address>
            <Actions>
              <MdExtension size={18} />
              <SideIcon />
              <Avatar />
              <Update><Fit w={50}>Update</Fit><MdMoreVert size={18} /></Update>
            </Actions>
          </Toolbar>
          <Bookmarks>
            {bookmarks.map(([icon, text, w]) => (
              <Bookmark key={text}>{marks[icon]}<Fit w={w}>{text}</Fit></Bookmark>
            ))}
            <More>»</More>
          </Bookmarks>
          <Viewport>
            <Page>
              <Navbar><Brand><Fit w={214}>InvestKraft Blogs</Fit></Brand><Fit w={60}>Home</Fit></Navbar>
              <Container>
                <Heading><Fit w={222}>Article List</Fit></Heading>
                <Button $tone="primary" $w={146}><Fit w={111}>Add Article</Fit></Button>
                {rows.map((cards, r) => (
                  <Row key={r} $first={r === 0}>{cards.map((c, i) => <Article key={i} {...c} />)}</Row>
                ))}
              </Container>
              <EditModal />
            </Page>
            <Scrollbar><Caret c="#a3a3a3" up w={8} /><Thumb /><Caret c="#505050" w={8} /></Scrollbar>
          </Viewport>
        </Window>
      </Body>
    </Desktop>
  );
}
